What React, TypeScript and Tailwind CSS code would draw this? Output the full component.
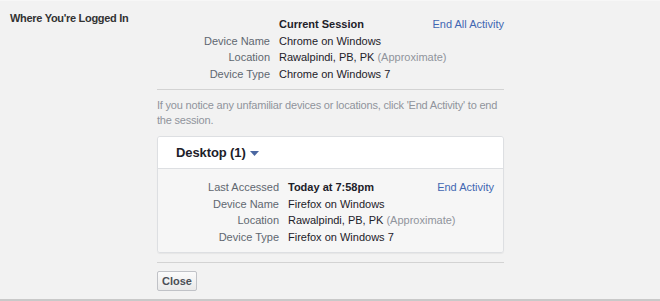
import React from "react";

const Row = ({ label, children, right, labelW }: { label: string; children: React.ReactNode; right?: React.ReactNode; labelW: string }) => (
  <div className="flex items-center h-[16.5px]">
    <div className={`${labelW} shrink-0 text-right text-[#606770]`}>{label}</div>
    <div className="ml-[9px] flex-1 text-[#1d2129] whitespace-nowrap">{children}</div>
    {right}
  </div>
);

export default function App() {
  return (
    <div
      className="w-[660px] h-[301px] bg-[#f2f2f2] border-t border-t-[#f7f7f7] border-b-2 border-b-[#c9c9c9] flex text-[11px] leading-[16px]"
      style={{ fontFamily: '"Liberation Sans", Arial, sans-serif' }}
    >
      <div className="w-[157px] shrink-0 pl-[10px] pt-[9px]">
        <div className="font-bold text-[#333333] tracking-[-0.3px]">Where You're Logged In</div>
      </div>
      <div className="w-[347px] shrink-0 flex flex-col pt-[15px]">
        <Row
          label=""
          labelW="w-[113px]"
          right={<a className="text-[#4267b2] cursor-pointer">End All Activity</a>}
        >
          <span className="font-bold">Current Session</span>
        </Row>
        <Row label="Device Name" labelW="w-[113px]">Chrome on Windows</Row>
        <Row label="Location" labelW="w-[113px]">
          Rawalpindi, PB, PK <span className="text-[#90949c]">(Approximate)</span>
        </Row>
        <Row label="Device Type" labelW="w-[113px]">Chrome on Windows 7</Row>
        <div className="mt-[7px] border-t border-[#d3d3d3]" />
        <p className="mt-[8px] text-[#90949c] leading-[15px] tracking-[-0.2px]">
          If you notice any unfamiliar devices or locations, click 'End Activity' to end the session.
        </p>
        <div className="mt-[8px] rounded-[3px] border border-[#dddfe2] shadow-[0_1px_1px_rgba(0,0,0,0.05)] overflow-hidden">
          <div className="h-[32px] bg-white flex items-center pl-[18px] border-b border-[#dddfe2]">
            <span className="font-bold text-[13px] text-[#1d2129] tracking-[-0.1px]">Desktop (1)</span>
            <svg width="9" height="5" viewBox="0 0 9 5" className="ml-[4px] mt-[2px]">
              <path d="M0 0 H9 L4.5 5 Z" fill="#4b67a1" />
            </svg>
          </div>
          <div className="bg-[#f6f6f6] pt-[10px] pb-[7px] pr-[9px]">
            <Row
              label="Last Accessed"
              labelW="w-[121px]"
              right={<a className="text-[#4267b2] cursor-pointer">End Activity</a>}
            >
              <span className="font-bold">Today at 7:58pm</span>
            </Row>
            <Row label="Device Name" labelW="w-[121px]">Firefox on Windows</Row>
            <Row label="Location" labelW="w-[121px]">
              Rawalpindi, PB, PK <span className="text-[#90949c]">(Approximate)</span>
            </Row>
            <Row label="Device Type" labelW="w-[121px]">Firefox on Windows 7</Row>
          </div>
        </div>
        <div className="mt-[9px] border-t border-[#d3d3d3]" />
        <div className="mt-[8px]">
          <button className="h-[20px] w-[40px] border border-[#c0c2c7] rounded-[2px] bg-gradient-to-b from-[#fbfbfb] to-[#e9e9e9] font-bold text-[#4b4f56] text-[11px] leading-[18px]">
            Close
          </button>
        </div>
      </div>
    </div>
  );
}
